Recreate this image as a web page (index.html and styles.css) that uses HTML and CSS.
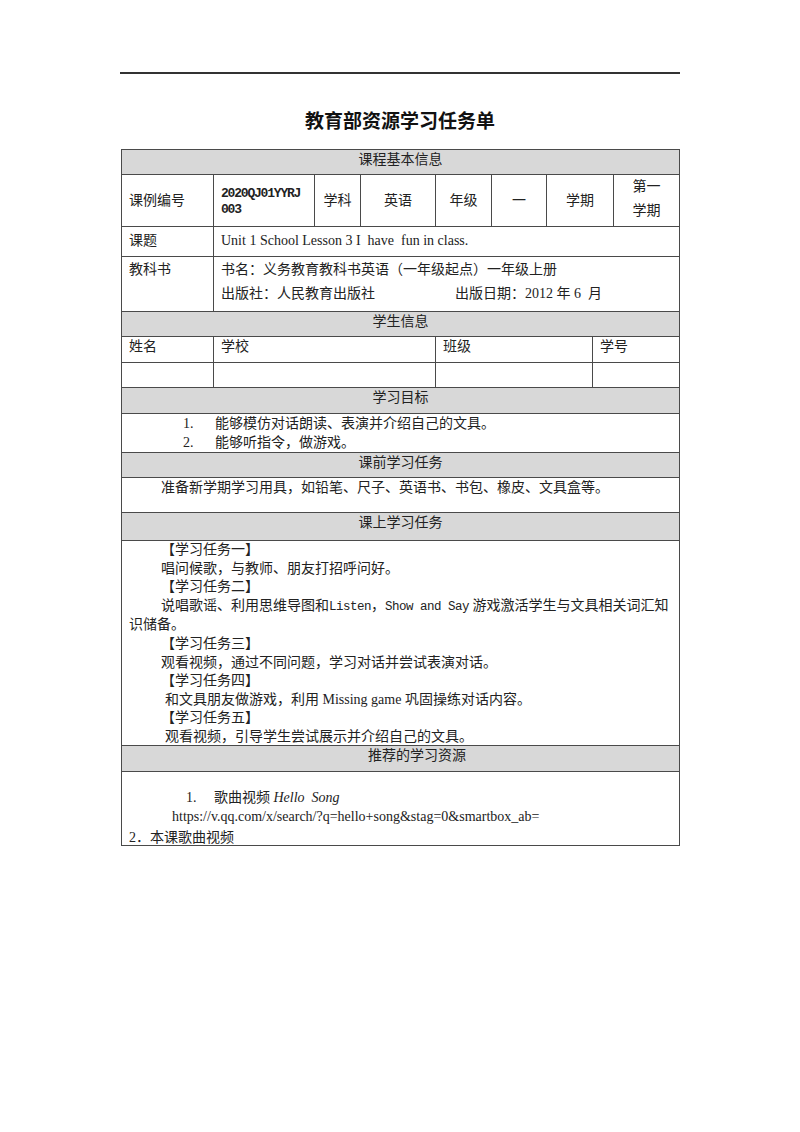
FILE: index.html
```html
<!DOCTYPE html>
<html lang="zh">
<head>
<meta charset="utf-8">
<title>教育部资源学习任务单</title>
<link rel="stylesheet" href="styles.css">
</head>
<body>
<div class="page">
  <div class="rule"></div>
  <h1 class="title">教育部资源学习任务单</h1>
  <div class="sheet">
    <div class="row head h24"><div class="cell">课程基本信息</div></div>

    <div class="row r-info h52">
      <div class="cell mid">课例编号</div>
      <div class="cell mid code">2020QJ01YYRJ<br>003</div>
      <div class="cell mid ctr">学科</div>
      <div class="cell mid ctr">英语</div>
      <div class="cell mid ctr">年级</div>
      <div class="cell mid ctr">一</div>
      <div class="cell mid ctr">学期</div>
      <div class="cell ctr two-line">第一<br>学期</div>
    </div>

    <div class="row r-two h30">
      <div class="cell pad4">课题</div>
      <div class="cell pad4 pre">Unit 1 School Lesson 3 I  have  fun in class.</div>
    </div>

    <div class="row r-two h55">
      <div class="cell lh24">教科书</div>
      <div class="cell lh24">
        <div>书名：义务教育教科书英语（一年级起点）一年级上册</div>
        <div class="pub"><span class="pub-name">出版社：人民教育出版社</span><span class="pre">出版日期：2012 年 6  月</span></div>
      </div>
    </div>

    <div class="row head h25"><div class="cell">学生信息</div></div>

    <div class="row r-stu h26">
      <div class="cell">姓名</div>
      <div class="cell">学校</div>
      <div class="cell">班级</div>
      <div class="cell">学号</div>
    </div>
    <div class="row r-stu h25">
      <div class="cell"></div>
      <div class="cell"></div>
      <div class="cell"></div>
      <div class="cell"></div>
    </div>

    <div class="row head h26"><div class="cell">学习目标</div></div>

    <div class="row h39">
      <div class="cell goals">
        <div class="goal"><span class="num">1.</span><span>能够模仿对话朗读、表演并介绍自己的文具。</span></div>
        <div class="goal"><span class="num">2.</span><span>能够听指令，做游戏。</span></div>
      </div>
    </div>

    <div class="row head h25"><div class="cell">课前学习任务</div></div>
    <div class="row h35">
      <div class="cell pre-task">准备新学期学习用具，如铅笔、尺子、英语书、书包、橡皮、文具盒等。</div>
    </div>

    <div class="row head h28"><div class="cell">课上学习任务</div></div>
    <div class="row h205">
      <div class="cell tasks">
        <p class="t">【学习任务一】</p>
        <p class="t">唱问候歌，与教师、朋友打招呼问好。</p>
        <p class="t">【学习任务二】</p>
        <p class="t"><span class="nowrap">说唱歌谣、利用思维导图和<span class="mono">Listen</span>，<span class="mono">Show and Say</span> 游戏激活学生与文具相关词汇知</span><br>识储备。</p>
        <p class="t">【学习任务三】</p>
        <p class="t">观看视频，通过不同问题，学习对话并尝试表演对话。</p>
        <p class="t">【学习任务四】</p>
        <p class="t t2">和文具朋友做游戏，利用 Missing game 巩固操练对话内容。</p>
        <p class="t">【学习任务五】</p>
        <p class="t t2">观看视频，引导学生尝试展示并介绍自己的文具。</p>
      </div>
    </div>

    <div class="row head h26"><div class="cell shift">推荐的学习资源</div></div>
    <div class="row h74">
      <div class="cell res">
        <div class="res-item"><span class="num2">1.</span><span>歌曲视频 <em>Hello&nbsp; Song</em></span></div>
        <div class="url">https://v.qq.com/x/search/?q=hello+song&amp;stag=0&amp;smartbox_ab=</div>
        <div class="res-last">2．本课歌曲视频</div>
      </div>
    </div>
  </div>
</div>
</body>
</html>
```

FILE: styles.css
```css
* { box-sizing: border-box; }

body {
  margin: 0;
  background: #ffffff;
  color: #222222;
  font-family: "Liberation Serif", "Noto Sans CJK SC", serif;
  font-size: 14px;
}

.page {
  width: 560px;
  margin: 0 auto;
  padding-top: 72px;
}

.rule {
  border-top: 2px solid #333333;
}

.title {
  margin: 32px 0 15px;
  text-align: center;
  font-family: "Noto Sans CJK SC", sans-serif;
  font-weight: bold;
  font-size: 19px;
  line-height: 28px;
  color: #111111;
}

.sheet {
  margin-left: 1px;
  width: 559px;
  border: 1px solid #4a4a4a;
}

.row {
  display: grid;
  grid-template-columns: 1fr;
  border-top: 1px solid #4a4a4a;
  overflow: hidden;
}
.row:first-child { border-top: 0; }

.cell {
  border-left: 1px solid #4a4a4a;
  padding: 0 7px;
  line-height: 20px;
  min-width: 0;
}
.cell:first-child { border-left: 0; }

.head { background: #d8d8d8; }
.head .cell { text-align: center; }
.head .shift { padding-left: 40px; }

.r-info { grid-template-columns: 91px 101px 46px 75px 56px 55px 67px 1fr; }
.r-two  { grid-template-columns: 91px 1fr; }
.r-stu  { grid-template-columns: 91px 222px 157px 1fr; }

.h24 { height: 24px; }
.h25 { height: 25px; }
.h26 { height: 26px; }
.h28 { height: 28px; }
.h30 { height: 30px; }
.h35 { height: 35px; }
.h39 { height: 39px; }
.h52 { height: 52px; }
.h55 { height: 55px; }
.h74 { height: 74px; }
.h205 { height: 205px; }

.mid {
  display: flex;
  flex-direction: column;
  justify-content: center;
}
.ctr { text-align: center; align-items: center; padding: 0 2px; }

.code {
  font-family: "Liberation Mono", monospace;
  font-weight: bold;
  font-size: 13px;
  letter-spacing: -1.2px;
  line-height: 16px;
  padding-top: 2px;
}

.two-line { line-height: 24px; }

.pad4 { padding-top: 4px; }
.pre { white-space: pre; }

.lh24 { line-height: 24px; padding-top: 1px; }
.pub { display: flex; }
.pub-name { width: 234px; flex: none; }

.goals { padding-left: 61px; }
.goal { display: flex; line-height: 19px; }
.num { width: 32px; flex: none; }

.pre-task { padding-left: 39px; }

.tasks p { margin: 0; }
.t { line-height: 18.6px; text-indent: 32px; }
.t2 { text-indent: 36px; }
.nowrap { white-space: nowrap; }
.mono {
  font-family: "Liberation Mono", monospace;
  font-size: 12.5px;
  letter-spacing: -0.5px;
}

.res { padding-top: 16px; }
.res-item { display: flex; padding-left: 57px; line-height: 19px; }
.num2 { width: 28px; flex: none; }
.res-item em { font-style: italic; }
.url { padding-left: 43px; line-height: 19px; }
.res-last { line-height: 24px; }
```
